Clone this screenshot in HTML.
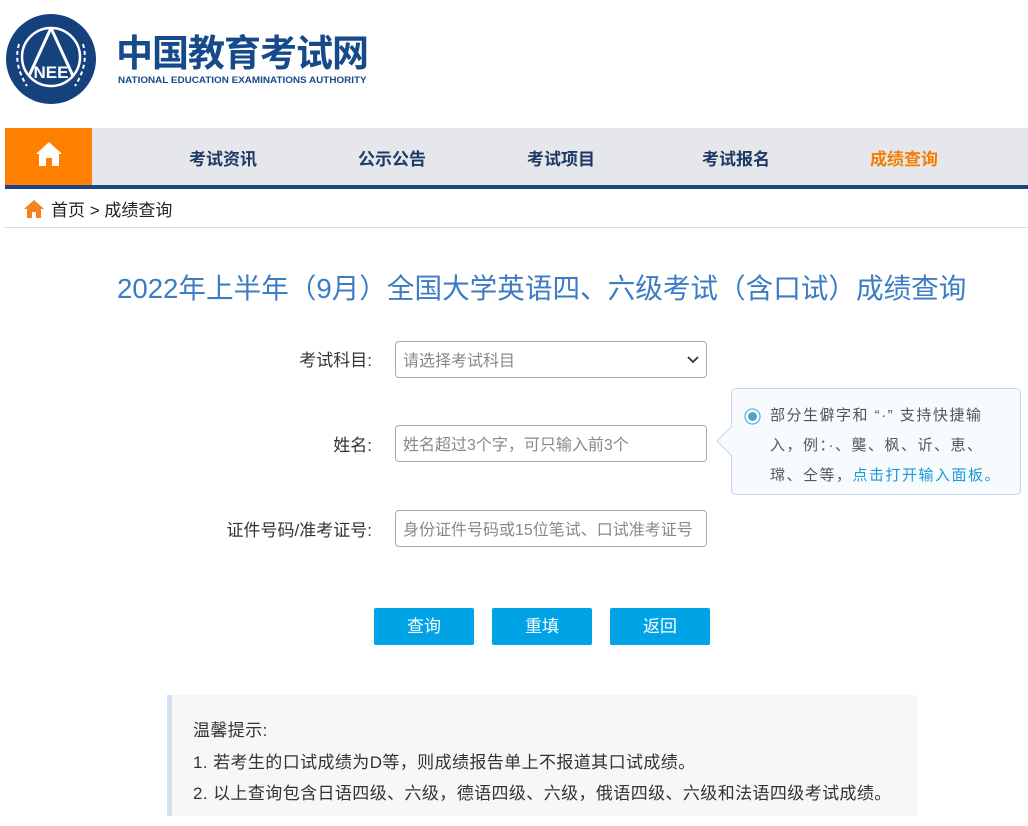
<!DOCTYPE html>
<html><head><meta charset="utf-8"><style>
*{margin:0;padding:0;box-sizing:border-box}
body{width:1028px;height:826px;overflow:hidden;background:#fff;font-family:"Liberation Sans","Noto Sans CJK SC",sans-serif;color:#333;position:relative}
.a{position:absolute}
.nav{left:5px;top:128px;width:1023px;height:57px;background:#e6e7eb}
.navline{left:5px;top:185px;width:1023px;height:4px;background:#1a4585}
.home{left:5px;top:128px;width:87px;height:57px;background:#ff7f00}
.ni{top:145px;font-size:17px;font-weight:bold;color:#1d3a66;transform:translateX(-50%);white-space:nowrap}
.lbl{font-size:17px;color:#333;text-align:right;width:260px;left:112px}
.inp{left:395px;width:312px;height:37px;border:1px solid #aaa;border-radius:4px;font-size:16px;color:#888;padding:5px 7px;white-space:nowrap;overflow:hidden}
.btn{top:608px;width:100px;height:37px;background:#00a3e6;color:#fff;font-size:17px;text-align:center;line-height:37px;border-radius:2px}
.tip{left:731px;top:388px;width:290px;height:107px;border:1px solid #c6d6ea;border-radius:5px;background:#f8fbfe;font-size:15px;color:#555;line-height:30px;padding:12px 0 0 38px;letter-spacing:1.5px;white-space:nowrap}
.note{left:167px;top:695px;width:750px;height:121px;background:#f7f7f7;border-left:5px solid #d3e2f2;font-size:17px;color:#333;line-height:31.5px;padding:20px 0 0 21px;letter-spacing:0.4px}
</style></head><body>
<svg class="a" style="left:5px;top:14px" width="92" height="90" viewBox="0 0 92 90">
<circle cx="46" cy="45" r="45" fill="#15427c"/>
<circle cx="46" cy="43" r="29" fill="none" stroke="#fff" stroke-width="2.5"/>
<path d="M46 14 L24 62 M46 14 L68 62" stroke="#fff" stroke-width="3" fill="none"/>
<text x="46" y="64" fill="#fff" font-size="17" font-family="Liberation Sans" text-anchor="middle" font-weight="bold">NEE</text>
<path d="M14 30 Q8 50 22 72 M78 30 Q84 50 70 72" stroke="#fff" stroke-width="2" fill="none" stroke-dasharray="4 3"/>
</svg>
<div class="a" style="left:116px;top:23px;font-size:37px;font-weight:bold;color:#164a8a;letter-spacing:-1px">中国教育考试网</div>
<div class="a" style="left:118px;top:75px;font-size:9.5px;font-weight:bold;color:#164a8a;transform:scaleX(1.04);transform-origin:left top;white-space:nowrap">NATIONAL EDUCATION EXAMINATIONS AUTHORITY</div>
<div class="a nav"></div><div class="a navline"></div>
<div class="a home"><svg style="position:absolute;left:30px;top:13px" width="28" height="26" viewBox="0 0 28 26"><path d="M14 1 L1 13 L4 13 L4 25 L11 25 L11 17 L17 17 L17 25 L24 25 L24 13 L27 13 Z" fill="#fff"/></svg></div>
<div class="a ni" style="left:223px">考试资讯</div>
<div class="a ni" style="left:392px">公示公告</div>
<div class="a ni" style="left:561px">考试项目</div>
<div class="a ni" style="left:736px">考试报名</div>
<div class="a ni" style="left:904px;color:#f57d00">成绩查询</div>
<svg class="a" style="left:23px;top:199px" width="22" height="20" viewBox="0 0 22 20"><path d="M11 1 L1 10 L4 10 L4 19 L9 19 L9 13 L13 13 L13 19 L18 19 L18 10 L21 10 Z" fill="#f58220"/></svg>
<div class="a" style="left:51px;top:196px;font-size:17px;color:#222">首页 &gt; 成绩查询</div>
<div class="a" style="left:5px;top:227px;width:1023px;height:1px;background:#ddd"></div>
<div class="a" style="left:117px;top:266px;font-size:27.6px;color:#3b7cc4;white-space:nowrap">2022年上半年（9月）全国大学英语四、六级考试（含口试）成绩查询</div>
<div class="a lbl" style="top:346px">考试科目:</div>
<div class="a inp" style="top:341px">请选择考试科目<svg style="position:absolute;right:7px;top:14px" width="12" height="8"><path d="M1 1 L6 6 L11 1" stroke="#333" stroke-width="1.8" fill="none"/></svg></div>
<div class="a lbl" style="top:431px">姓名:</div>
<div class="a inp" style="top:425px">姓名超过3个字，可只输入前3个</div>
<div class="a lbl" style="top:516px">证件号码/准考证号:</div>
<div class="a inp" style="top:510px">身份证件号码或15位笔试、口试准考证号</div>
<div class="a tip">
<svg style="position:absolute;left:12px;top:19px" width="17" height="17"><circle cx="8.5" cy="8.5" r="7.5" fill="#fff" stroke="#5fb0d8" stroke-width="1.3"/><circle cx="8.5" cy="8.5" r="4.5" fill="#4aa3d2"/></svg>
部分生僻字和 “·” 支持快捷输<br>入，例：·、龑、枫、䜣、恵、<br>瑺、仝等，<span style="color:#1a9ad6">点击打开输入面板。</span></div>
<svg class="a" style="left:716px;top:426px" width="17" height="30"><path d="M16 0 L1 15 L16 30" fill="#f8fbfe" stroke="#c6d6ea"/></svg>
<div class="a btn" style="left:374px">查询</div>
<div class="a btn" style="left:492px">重填</div>
<div class="a btn" style="left:610px">返回</div>
<div class="a note">温馨提示:<br>1. 若考生的口试成绩为D等，则成绩报告单上不报道其口试成绩。<br>2. 以上查询包含日语四级、六级，德语四级、六级，俄语四级、六级和法语四级考试成绩。</div>
</body></html>
